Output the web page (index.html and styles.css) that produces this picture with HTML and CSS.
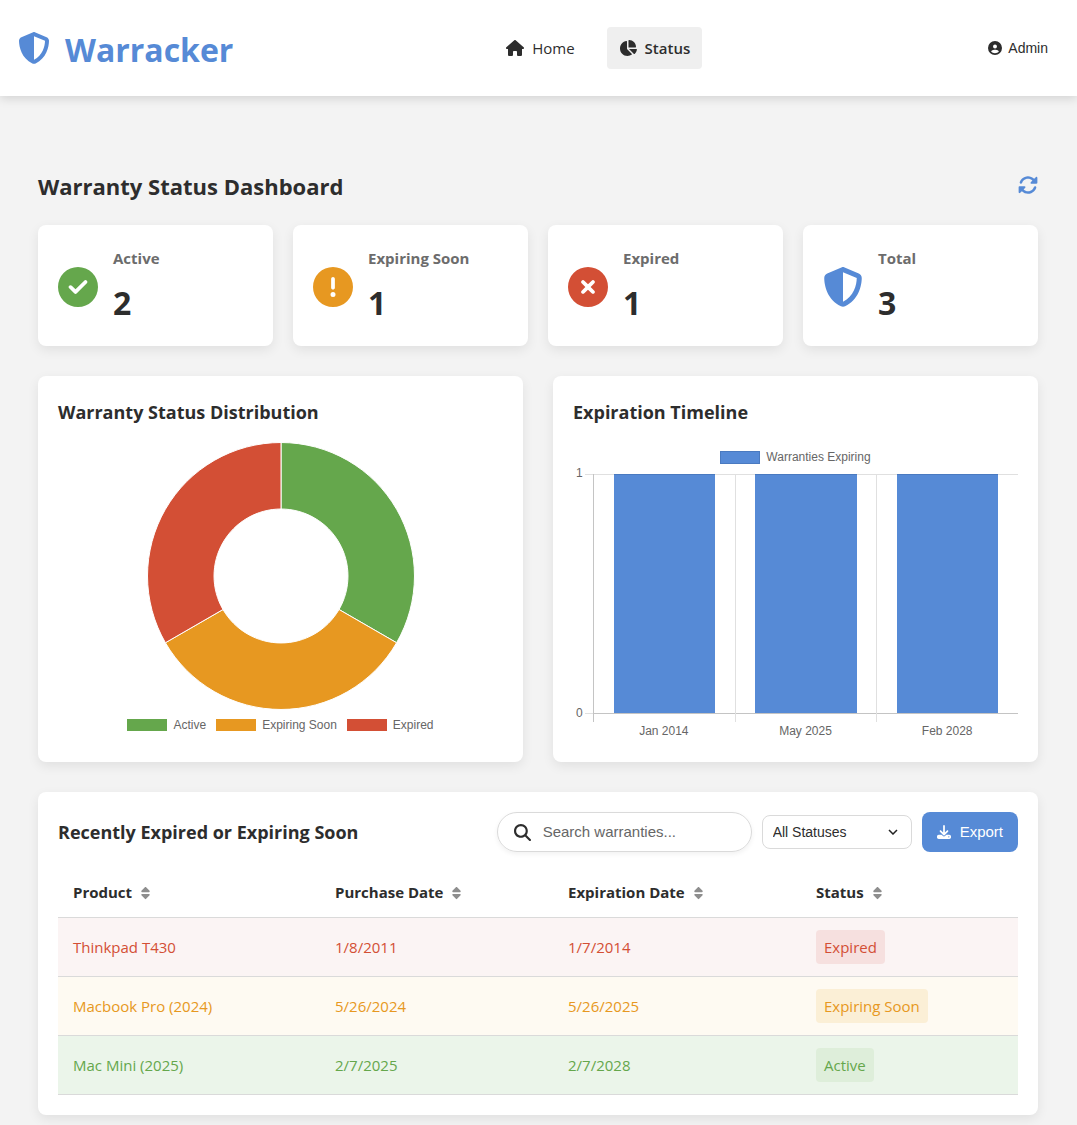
FILE: index.html
```html
<!DOCTYPE html>
<html lang="en">
<head>
<meta charset="utf-8">
<meta name="viewport" content="width=device-width, initial-scale=1">
<title>Warracker - Status</title>
<link rel="stylesheet" href="styles.css">
</head>
<body>
<svg class="sprite" aria-hidden="true">
  <symbol id="shield" viewBox="0 0 512 512"><path d="M256 0c4.600 0 9.200 1 13.400 2.900L457.700 82.800c22 9.300 38.400 31 38.300 57.200c-.5 99.200-41.300 280.700-213.600 363.200c-16.700 8-36.100 8-52.800 0C57.300 420.700 16.500 239.200 16 140c-.1-26.200 16.300-47.900 38.300-57.200L242.700 2.900C246.800 1 251.400 0 256 0zm0 66.800V444.800C394 378 431.100 230.100 432 141.400L256 66.800z"/></symbol>
  <symbol id="sort" viewBox="0 0 320 512"><path d="M137.400 41.400c12.500-12.500 32.800-12.500 45.300 0l128 128c9.200 9.200 11.900 22.900 6.900 34.900s-16.600 19.800-29.600 19.800H32c-12.900 0-24.600-7.800-29.600-19.800s-2.200-25.700 6.900-34.900l128-128zm0 429.300l-128-128c-9.200-9.200-11.900-22.900-6.900-34.900s16.600-19.800 29.600-19.800H288c12.900 0 24.600 7.800 29.600 19.800s2.200 25.700-6.900 34.900l-128 128c-12.500 12.500-32.800 12.500-45.300 0z"/></symbol>
</svg>

<header class="site-header">
  <div class="logo">
    <svg class="logo-icon" viewBox="0 0 512 512" aria-hidden="true"><use href="#shield"/></svg>
    <h1 class="logo-text">Warracker</h1>
  </div>
  <nav class="nav">
    <a class="nav-link" href="#home">
      <svg class="nav-icon" viewBox="0 0 576 512" aria-hidden="true"><path d="M575.800 255.500c0 18-15 32.100-32 32.100h-32l.7 160.200c0 2.700-.2 5.400-.5 8.100V472c0 22.100-17.900 40-40 40H392c-22.100 0-40-17.900-40-40V384c0-17.700-14.300-32-32-32H256c-17.700 0-32 14.300-32 32v88c0 22.100-17.900 40-40 40H104c-22.100 0-40-17.900-40-40V287.600H32c-18 0-32-14-32-32.100c0-9 3-17 10-24L266.400 8c7-7 15-8 22-8s15 2 21 7L564.800 231.500c8 7 12 15 11 24z"/></svg>
      Home
    </a>
    <a class="nav-link nav-link-active" href="#status" aria-current="page">
      <svg class="nav-icon" viewBox="0 0 576 512" aria-hidden="true"><path d="M304 240V16.600c0-9 7-16.600 16-16.600C443.700 0 544 100.300 544 224c0 9-7.600 16-16.600 16H304zM32 272C32 150.700 122.100 50.300 239 34.300c9.200-1.300 17 6.100 17 15.400V288L412.500 444.500c6.700 6.700 6.200 17.700-1.500 23.100C371.800 495.600 323.800 512 272 512C139.500 512 32 404.600 32 272zm526.400 16c9.300 0 16.600 7.800 15.400 17c-7.700 55.900-34.600 105.600-73.900 142.300c-6 5.600-15.400 5.200-21.200-.7L320 288H558.400z"/></svg>
      Status
    </a>
  </nav>
  <button class="user-button" type="button">
    <svg class="user-icon" viewBox="0 0 512 512" aria-hidden="true"><path d="M399 384.200C376.900 345.800 335.400 320 288 320H224c-47.400 0-88.900 25.800-111 64.200c35.200 39.200 86.200 63.800 143 63.800s107.800-24.700 143-63.800zM0 256a256 256 0 1 1 512 0A256 256 0 1 1 0 256zm256 16a72 72 0 1 0 0-144 72 72 0 1 0 0 144z"/></svg>
    Admin
  </button>
</header>

<main class="dashboard">
  <div class="dashboard-header">
    <h2 class="dashboard-title">Warranty Status Dashboard</h2>
    <button class="refresh-button" type="button" aria-label="Refresh dashboard">
      <svg class="refresh-icon" viewBox="0 0 512 512" aria-hidden="true"><path d="M142.900 142.900c62.200-62.200 162.700-62.500 225.300-1L327 183c-6.900 6.900-8.900 17.200-5.200 26.200s12.500 14.800 22.200 14.800H472c13.300 0 24-10.700 24-24V72c0-9.700-5.800-18.500-14.800-22.200s-19.300-1.700-26.200 5.200L413.400 96.600c-87.600-86.500-228.700-86.200-315.800 1C73.200 122 55.600 150.700 44.800 181.400c-5.900 16.700 2.900 34.900 19.500 40.800s34.900-2.900 40.800-19.500c7.700-21.800 20.200-42.300 37.800-59.800zM16 312V440c0 9.700 5.800 18.500 14.800 22.200s19.300 1.700 26.200-5.200l41.600-41.600c87.600 86.500 228.700 86.200 315.800-1c24.400-24.400 42.100-53.100 52.900-83.700c5.900-16.700-2.900-34.900-19.500-40.800s-34.900 2.900-40.800 19.500c-7.700 21.800-20.200 42.300-37.800 59.800c-62.200 62.200-162.700 62.500-225.300 1L185 329c6.900-6.900 8.900-17.200 5.200-26.200s-12.500-14.800-22.200-14.800H40c-13.300 0-24 10.700-24 24z"/></svg>
    </button>
  </div>

  <section class="stats" aria-label="Warranty totals">
    <article class="card stat">
      <svg class="stat-icon green" viewBox="0 0 512 512" aria-hidden="true"><path d="M256 512A256 256 0 1 0 256 0a256 256 0 1 0 0 512zM369 209L241 337c-9.400 9.400-24.600 9.400-33.900 0l-64-64c-9.400-9.400-9.400-24.600 0-33.900s24.600-9.400 33.900 0l47 47L335 175c9.400-9.400 24.600-9.400 33.900 0s9.400 24.600 0 33.900z"/></svg>
      <div><h3 class="stat-label">Active</h3><p class="stat-value">2</p></div>
    </article>
    <article class="card stat">
      <svg class="stat-icon orange" viewBox="0 0 512 512" aria-hidden="true"><path d="M256 512A256 256 0 1 0 256 0a256 256 0 1 0 0 512zm0-384c13.300 0 24 10.700 24 24V264c0 13.300-10.700 24-24 24s-24-10.700-24-24V152c0-13.300 10.700-24 24-24zM224 352a32 32 0 1 1 64 0 32 32 0 1 1 -64 0z"/></svg>
      <div><h3 class="stat-label">Expiring Soon</h3><p class="stat-value">1</p></div>
    </article>
    <article class="card stat">
      <svg class="stat-icon red" viewBox="0 0 512 512" aria-hidden="true"><path d="M256 512A256 256 0 1 0 256 0a256 256 0 1 0 0 512zM175 175c9.400-9.400 24.600-9.400 33.900 0l47 47 47-47c9.400-9.400 24.600-9.400 33.900 0s9.400 24.600 0 33.900l-47 47 47 47c9.400 9.400 9.400 24.600 0 33.900s-24.600 9.400-33.900 0l-47-47-47 47c-9.400 9.400-24.600 9.400-33.900 0s-9.400-24.600 0-33.900l47-47-47-47c-9.400-9.400-9.400-24.600 0-33.900z"/></svg>
      <div><h3 class="stat-label">Expired</h3><p class="stat-value">1</p></div>
    </article>
    <article class="card stat">
      <svg class="stat-icon blue" viewBox="0 0 512 512" aria-hidden="true"><use href="#shield"/></svg>
      <div><h3 class="stat-label">Total</h3><p class="stat-value">3</p></div>
    </article>
  </section>

  <div class="charts">
    <section class="card chart-card">
      <h3 class="card-title">Warranty Status Distribution</h3>
      <div class="donut-chart">
        <svg class="donut" viewBox="-133 -133 266 266" role="img" aria-label="One third active, one third expiring soon, one third expired">
          <g stroke="#fff" stroke-width="1">
            <path fill="#65a74c" d="M0-133.500A133.500 133.500 0 0 1 115.600 66.750L58 33.500A67 67 0 0 0 0-67z"/>
            <path fill="#e79821" d="M115.600 66.750A133.500 133.500 0 0 1-115.600 66.750L-58 33.500A67 67 0 0 0 58 33.500z"/>
            <path fill="#d34f35" d="M-115.600 66.750A133.500 133.500 0 0 1 0-133.500V-67A67 67 0 0 0-58 33.500z"/>
          </g>
        </svg>
        <ul class="legend">
          <li class="legend-item"><span class="swatch swatch-green"></span>Active</li>
          <li class="legend-item"><span class="swatch swatch-orange"></span>Expiring Soon</li>
          <li class="legend-item"><span class="swatch swatch-red"></span>Expired</li>
        </ul>
      </div>
    </section>

    <section class="card chart-card">
      <h3 class="card-title">Expiration Timeline</h3>
      <div class="bar-chart">
        <div class="bar-legend"><span class="swatch swatch-blue"></span>Warranties Expiring</div>
        <div class="axis-y"><span>1</span><span>0</span></div>
        <div class="ticks-y"></div>
        <div class="plot">
          <div class="slot"><div class="bar" style="height:100%"></div></div>
          <div class="slot"><div class="bar" style="height:100%"></div></div>
          <div class="slot"><div class="bar" style="height:100%"></div></div>
        </div>
        <div class="axis-x"><span>Jan 2014</span><span>May 2025</span><span>Feb 2028</span></div>
      </div>
    </section>
  </div>

  <section class="card recent">
    <div class="recent-header">
      <h3 class="card-title">Recently Expired or Expiring Soon</h3>
      <div class="actions">
        <label class="search">
          <svg class="search-icon" viewBox="0 0 512 512" aria-hidden="true"><path d="M416 208c0 45.900-14.900 88.300-40 122.700L502.600 457.400c12.500 12.500 12.500 32.800 0 45.300s-32.800 12.500-45.300 0L330.700 376c-34.400 25.200-76.800 40-122.700 40C93.100 416 0 322.900 0 208S93.100 0 208 0S416 93.100 416 208zM208 352a144 144 0 1 0 0-288 144 144 0 1 0 0 288z"/></svg>
          <input class="search-input" type="text" placeholder="Search warranties..." aria-label="Search warranties">
        </label>
        <div class="filter">
          <select class="filter-select" aria-label="Filter by status">
            <option>All Statuses</option>
            <option>Active</option>
            <option>Expiring Soon</option>
            <option>Expired</option>
          </select>
          <svg class="filter-arrow" viewBox="0 0 10 6" aria-hidden="true"><path d="M1 1l4 4 4-4" fill="none" stroke="#222" stroke-width="1.500"/></svg>
        </div>
        <button class="export-button" type="button">
          <svg class="export-icon" viewBox="0 0 512 512" aria-hidden="true"><path d="M288 32c0-17.700-14.300-32-32-32s-32 14.300-32 32V274.700l-73.400-73.400c-12.500-12.500-32.800-12.500-45.300 0s-12.500 32.800 0 45.300l128 128c12.500 12.500 32.800 12.500 45.300 0l128-128c12.500-12.500 12.500-32.800 0-45.300s-32.800-12.500-45.300 0L288 274.700V32zM64 352c-35.300 0-64 28.700-64 64v32c0 35.300 28.700 64 64 64H448c35.300 0 64-28.700 64-64V416c0-35.300-28.700-64-64-64H346.500l-45.300 45.300c-25 25-65.500 25-90.500 0L165.500 352H64zm368 56a24 24 0 1 1 0 48 24 24 0 1 1 0-48z"/></svg>
          Export
        </button>
      </div>
    </div>

    <table class="table">
      <colgroup><col class="col-product"><col class="col-purchase"><col class="col-expiration"><col class="col-status"></colgroup>
      <thead>
        <tr>
          <th scope="col">Product<svg class="sort-icon" viewBox="0 0 320 512" aria-hidden="true"><use href="#sort"/></svg></th>
          <th scope="col">Purchase Date<svg class="sort-icon" viewBox="0 0 320 512" aria-hidden="true"><use href="#sort"/></svg></th>
          <th scope="col">Expiration Date<svg class="sort-icon" viewBox="0 0 320 512" aria-hidden="true"><use href="#sort"/></svg></th>
          <th scope="col">Status<svg class="sort-icon" viewBox="0 0 320 512" aria-hidden="true"><use href="#sort"/></svg></th>
        </tr>
      </thead>
      <tbody>
        <tr class="row-expired"><td>Thinkpad T430</td><td>1/8/2011</td><td>1/7/2014</td><td><span class="badge">Expired</span></td></tr>
        <tr class="row-expiring"><td>Macbook Pro (2024)</td><td>5/26/2024</td><td>5/26/2025</td><td><span class="badge">Expiring Soon</span></td></tr>
        <tr class="row-active"><td>Mac Mini (2025)</td><td>2/7/2025</td><td>2/7/2028</td><td><span class="badge">Active</span></td></tr>
      </tbody>
    </table>
  </section>
</main>
</body>
</html>
```
FILE: styles.css
```css
:root {
  --blue: #568ad6;
  --green: #65a74c;
  --orange: #e79821;
  --red: #d34f35;
  --text: #2d2d2d;
  --muted: #6c6c6c;
  --line: #dadada;
  --ui: "Segoe UI", "Open Sans", "Noto Sans", sans-serif;
  --plain: "Liberation Sans", Arial, sans-serif;
}

* { box-sizing: border-box; }

body {
  margin: 0;
  background: #f3f3f3;
  color: var(--text);
  font: 15px/24px var(--ui);
}

h1, h2, h3, p, ul { margin: 0; padding: 0; }
ul { list-style: none; }
button, input, select { font: 14px/20px var(--plain); color: inherit; }
button { border: 0; background: none; cursor: pointer; }
svg { fill: currentColor; flex: none; }
.sprite { display: none; }

/* Header */
.site-header {
  display: flex;
  align-items: center;
  justify-content: space-between;
  min-height: 96px;
  padding: 0 20px 0 18px;
  background: #fff;
  box-shadow: 0 2px 10px rgba(0, 0, 0, .15);
}
.logo { display: flex; align-items: center; gap: 15px; color: var(--blue); }
.logo-icon { width: 32px; height: 32px; }
.logo-text { padding-top: 3px; font-size: 32px; line-height: 48px; font-weight: 700; }
.nav { display: flex; gap: 20px; }
.nav-link {
  display: flex;
  align-items: center;
  gap: 8px;
  padding: 9px 12px;
  border-radius: 4px;
  color: var(--text);
  text-decoration: none;
}
.nav-link-active { background: #efefef; font-weight: 600; }
.nav-icon { width: 18px; height: 16px; }
.user-button {
  display: flex;
  align-items: center;
  justify-content: flex-end;
  gap: 6px;
  min-width: 94px;
  padding: 8px 9px;
}
.user-icon { width: 14px; height: 14px; }

/* Dashboard */
.dashboard { padding: 70px 39px 10px 38px; }
.dashboard-header {
  display: flex;
  align-items: center;
  justify-content: space-between;
  margin-bottom: 19px;
}
.dashboard-title { font-size: 22px; line-height: 40px; }
.refresh-button { display: flex; padding: 0 0 2px; color: var(--blue); }
.refresh-icon { width: 20px; height: 20px; }

.card {
  border-radius: 8px;
  background: #fff;
  box-shadow: 0 4px 12px rgba(0, 0, 0, .08);
}
.card-title { font-size: 18px; line-height: 32px; }

.stats {
  display: grid;
  grid-template-columns: repeat(4, 1fr);
  gap: 20px;
  margin-bottom: 30px;
}
.stat { display: flex; align-items: center; gap: 15px; padding: 21px 20px 19px; }
.stat-icon { width: 40px; height: 40px; }
.stat-label { margin-bottom: 8px; font-size: 15px; line-height: 25px; color: var(--muted); }
.stat-value { font-size: 32px; line-height: 48px; font-weight: 700; }
.green { color: var(--green); }
.orange { color: var(--orange); }
.red { color: var(--red); }
.blue { color: var(--blue); }

.charts {
  display: grid;
  grid-template-columns: 1fr 1fr;
  gap: 30px;
  margin-bottom: 30px;
}
.chart-card { padding: 20px; font: 12px/14px var(--plain); color: #666; }
.chart-card .card-title { font-family: var(--ui); color: var(--text); }

.donut-chart {
  display: flex;
  flex-direction: column;
  align-items: center;
  gap: 9px;
  padding: 15px 0 10px;
}
.donut { width: 266px; height: 266px; overflow: visible; }
.legend { display: flex; gap: 10px; }
.legend-item { display: flex; align-items: center; gap: 6px; }
.swatch { width: 40px; height: 12px; }
.swatch-green { background: var(--green); }
.swatch-orange { background: var(--orange); }
.swatch-red { background: var(--red); }
.swatch-blue { height: 13px; background: var(--blue); border: 1px solid #4a7ac0; }

.bar-chart {
  display: grid;
  grid-template-columns: 12px 8px 1fr;
  grid-template-rows: auto 248px auto;
  padding-top: 22px;
}
.bar-legend {
  grid-column: 1 / -1;
  display: flex;
  align-items: center;
  justify-content: center;
  gap: 6px;
  padding-bottom: 10px;
}
.axis-y {
  display: flex;
  flex-direction: column;
  justify-content: space-between;
  height: 254px;
  margin-top: -8px;
  padding-left: 3px;
}
.ticks-y { height: 240px; border: solid #e0e0e0; border-width: 1px 0; }
.plot {
  display: grid;
  grid-template-columns: repeat(3, 1fr);
  height: 248px;
  background: linear-gradient(#e0e0e0, #e0e0e0) 0 0 / 100% 1px no-repeat;
}
.slot {
  display: flex;
  align-items: flex-end;
  justify-content: center;
  height: 248px;
  padding-bottom: 8px;
  border-left: 1px solid #e0e0e0;
  background: linear-gradient(#c4c4c4, #c4c4c4) 0 239px / 100% 1px no-repeat;
}
.slot:first-child { border-left-color: #c4c4c4; }
.bar {
  width: 72%;
  background: var(--blue);
  border-top: 1px solid #4a7ac0;
  border-bottom: 1px solid #c4c4c4;
}
.axis-x {
  grid-column: 3;
  display: grid;
  grid-template-columns: repeat(3, 1fr);
  padding-top: 2px;
  text-align: center;
}

/* Recent warranties */
.recent { padding: 20px; }
.recent-header {
  display: flex;
  align-items: center;
  justify-content: space-between;
  margin-bottom: 15px;
}
.actions { display: flex; align-items: center; gap: 10px; }
.search {
  display: flex;
  align-items: center;
  gap: 12px;
  width: 255px;
  height: 40px;
  padding: 0 16px;
  border: 1px solid var(--line);
  border-radius: 20px;
  box-shadow: 0 2px 5px rgba(0, 0, 0, .06);
}
.search-icon { width: 17px; height: 17px; }
.search-input {
  flex: 1;
  min-width: 0;
  padding: 0;
  border: 0;
  outline: 0;
  background: none;
  font-size: 15px;
}
.search-input::placeholder { color: #666; opacity: 1; }
.filter { position: relative; }
.filter-select {
  width: 150px;
  height: 34px;
  padding: 0 10px;
  border: 1px solid var(--line);
  border-radius: 8px;
  background: #fff;
  appearance: none;
}
.filter-arrow {
  position: absolute;
  top: 14px;
  right: 14px;
  width: 10px;
  height: 6px;
  pointer-events: none;
}
.export-button {
  display: flex;
  align-items: center;
  gap: 9px;
  height: 40px;
  padding: 0 15px;
  border-radius: 8px;
  background: var(--blue);
  color: #fff;
  font-size: 15px;
}
.export-icon { width: 14px; height: 14px; }

.table {
  width: 100%;
  table-layout: fixed;
  border-collapse: collapse;
  text-align: left;
}
.col-product { width: 262px; }
.col-purchase { width: 233px; }
.col-expiration { width: 248px; }
.col-status { width: 217px; }
.table th, .table td { padding: 0 15px; border-bottom: 1px solid var(--line); }
.table th { height: 50px; font-weight: 700; }
.table td { height: 59px; }
.sort-icon { width: 9px; height: 14px; margin-left: 9px; vertical-align: -2px; color: #8e8e8e; }
.badge { display: inline-block; padding: 5px 8px; border-radius: 4px; }
.row-expired { background: #fbf4f4; color: var(--red); }
.row-expired .badge { background: #f6e0df; }
.row-expiring { background: #fefaf2; color: var(--orange); }
.row-expiring .badge { background: #fbefd6; }
.row-active { background: #ebf5ea; color: var(--green); }
.row-active .badge { background: #deeeda; }
```
